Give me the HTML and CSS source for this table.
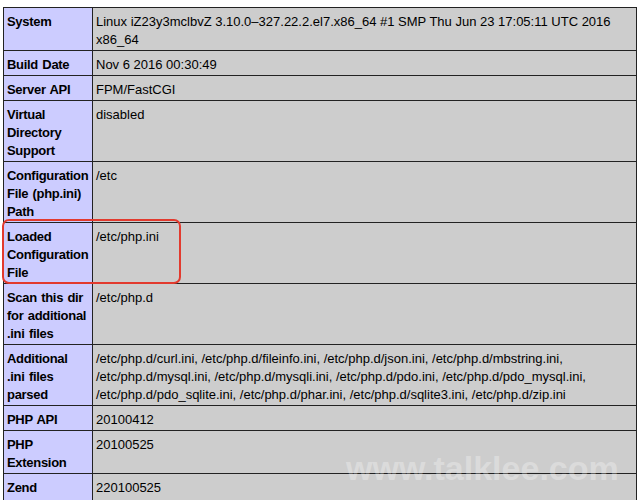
FILE: index.html
```html
<!DOCTYPE html>
<html lang="en">
<head>
    <meta charset="UTF-8">
    <title>phpinfo()</title>
    <link rel="stylesheet" href="styles.css">
</head>
<body>
    <div class="center">
        <table class="info">
            <tr><td class="e">System</td><td class="v">Linux iZ23y3mclbvZ 3.10.0–327.22.2.el7.x86_64 #1 SMP Thu Jun 23 17:05:11 UTC 2016 x86_64</td></tr>
            <tr><td class="e">Build Date</td><td class="v">Nov 6 2016 00:30:49</td></tr>
            <tr><td class="e">Server API</td><td class="v">FPM/FastCGI</td></tr>
            <tr><td class="e">Virtual Directory Support</td><td class="v">disabled</td></tr>
            <tr><td class="e">Configuration File (php.ini) Path</td><td class="v">/etc</td></tr>
            <tr><td class="e">Loaded Configuration File<span class="mark"></span></td><td class="v">/etc/php.ini</td></tr>
            <tr><td class="e">Scan this dir for additional .ini files</td><td class="v">/etc/php.d</td></tr>
            <tr><td class="e">Additional .ini files parsed</td><td class="v">/etc/php.d/curl.ini, /etc/php.d/fileinfo.ini, /etc/php.d/json.ini, /etc/php.d/mbstring.ini, /etc/php.d/mysql.ini, /etc/php.d/mysqli.ini, /etc/php.d/pdo.ini, /etc/php.d/pdo_mysql.ini, /etc/php.d/pdo_sqlite.ini, /etc/php.d/phar.ini, /etc/php.d/sqlite3.ini, /etc/php.d/zip.ini</td></tr>
            <tr><td class="e">PHP API</td><td class="v">20100412</td></tr>
            <tr><td class="e">PHP Extension</td><td class="v">20100525</td></tr>
            <tr><td class="e">Zend Extension</td><td class="v">220100525</td></tr>
        </table>
        <div class="watermark">www.talklee.com</div>
    </div>
</body>
</html>
```

FILE: styles.css
```css
body {
    margin: 0;
    background: #fff;
    font-family: Helvetica, "Liberation Sans", Arial, sans-serif;
    color: #000;
    overflow: hidden;
}
.center {
    position: relative;
    padding: 7px 4px 0 3px;
}
.info {
    width: 100%;
    border-collapse: collapse;
}
.info td {
    border: 1px solid #222;
    font-size: 13px;
    line-height: 18px;
    padding: 5px 1px 1px 3px;
    vertical-align: top;
}
.e {
    background: #ccccff;
    font-weight: bold;
    letter-spacing: -0.3px;
    word-spacing: 1px;
    width: 82px;
    padding-right: 3px !important;
    position: relative;
}
.v {
    background: #cdcdcd;
}
.mark {
    position: absolute;
    left: -2px;
    top: -4px;
    width: 175px;
    height: 61px;
    border: 2.5px solid #e23a2e;
    border-radius: 7px;
    z-index: 2;
}
.watermark {
    position: absolute;
    left: 346px;
    top: 451px;
    font-family: "Liberation Sans", Arial, sans-serif;
    font-weight: bold;
    font-size: 34px;
    line-height: 1;
    color: rgba(255, 255, 255, 0.3);
}
```
